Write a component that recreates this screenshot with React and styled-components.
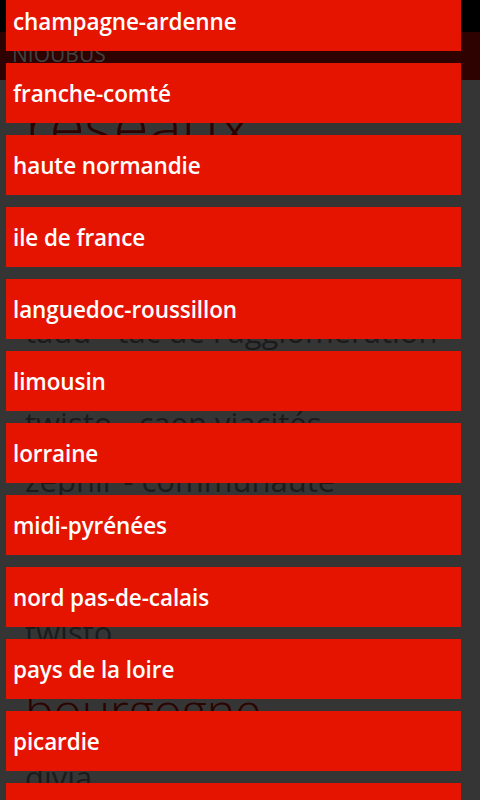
import React from "react";
import styled, { createGlobalStyle } from "styled-components";

const regions = [
  "champagne-ardenne",
  "franche-comté",
  "haute normandie",
  "ile de france",
  "languedoc-roussillon",
  "limousin",
  "lorraine",
  "midi-pyrénées",
  "nord pas-de-calais",
  "pays de la loire",
  "picardie",
  "poitou-charentes",
];

const GlobalStyle = createGlobalStyle`
  html, body {
    margin: 0;
    padding: 0;
    background: #353535;
  }
  body {
    font-family: "Open Sans", "Noto Sans", sans-serif;
  }
`;

const App = () => {
  return (
    <Page>
      <GlobalStyle />
      <StatusBar />
      <AppBar>
        <AppTitle>NIOUBUS</AppTitle>
      </AppBar>
      <Content>
        <PageTitle>réseaux</PageTitle>
        <GroupTitle $space={60}>basse-normandie</GroupTitle>
        <Item $space={51}>tadu - tac de l'agglomération</Item>
        <Item $space={61}>twisto - caen viacités</Item>
        <Item $space={26}>zephir - communauté</Item>
        <Item $space={121}>twisto</Item>
        <GroupTitle $space={39}>bourgogne</GroupTitle>
        <Item $space={27}>divia</Item>
      </Content>

      <Overlay>
        <TileList>
          {regions.map((region) => (
            <Tile key={region}>{region}</Tile>
          ))}
        </TileList>
      </Overlay>
    </Page>
  );
};

export default App;

const Page = styled.div`
  position: relative;
  width: 480px;
  height: 800px;
  overflow: hidden;
  background: #353535;
`;

const StatusBar = styled.div`
  height: 32px;
  background: #000;
`;

const AppBar = styled.div`
  height: 48px;
  background: #2d0200;
  padding-left: 12px;
  display: flex;
  align-items: flex-start;
`;

const AppTitle = styled.span`
  margin-top: 12px;
  font-size: 21px;
  line-height: 21px;
  color: #424242;
`;

const Content = styled.div`
  padding: 15px 0 0 25px;
  display: flex;
  flex-direction: column;
  align-items: flex-start;
`;

const PageTitle = styled.div`
  font-size: 64px;
  line-height: 62px;
  font-weight: 300;
  color: #2b0300;
  letter-spacing: -0.5px;
`;

const GroupTitle = styled.div`
  margin-top: ${(props) => props.$space}px;
  font-size: 48px;
  line-height: 48px;
  font-weight: 300;
  color: #2b0300;
`;

const Item = styled.div`
  margin-top: ${(props) => props.$space}px;
  font-size: 31px;
  line-height: 31px;
  color: #1b1b1b;
  white-space: nowrap;
`;

const Overlay = styled.div`
  position: absolute;
  inset: 0;
  overflow: hidden;
`;

const TileList = styled.div`
  margin-top: -9px;
  padding-left: 6px;
  width: 455px;
  display: flex;
  flex-direction: column;
  gap: 12px;
`;

const Tile = styled.div`
  height: 60px;
  background: #e51400;
  color: #fff;
  display: flex;
  align-items: center;
  padding: 1px 0 0 7px;
  box-sizing: border-box;
  font-size: 22.5px;
  font-weight: 600;
  letter-spacing: -0.1px;
`;
